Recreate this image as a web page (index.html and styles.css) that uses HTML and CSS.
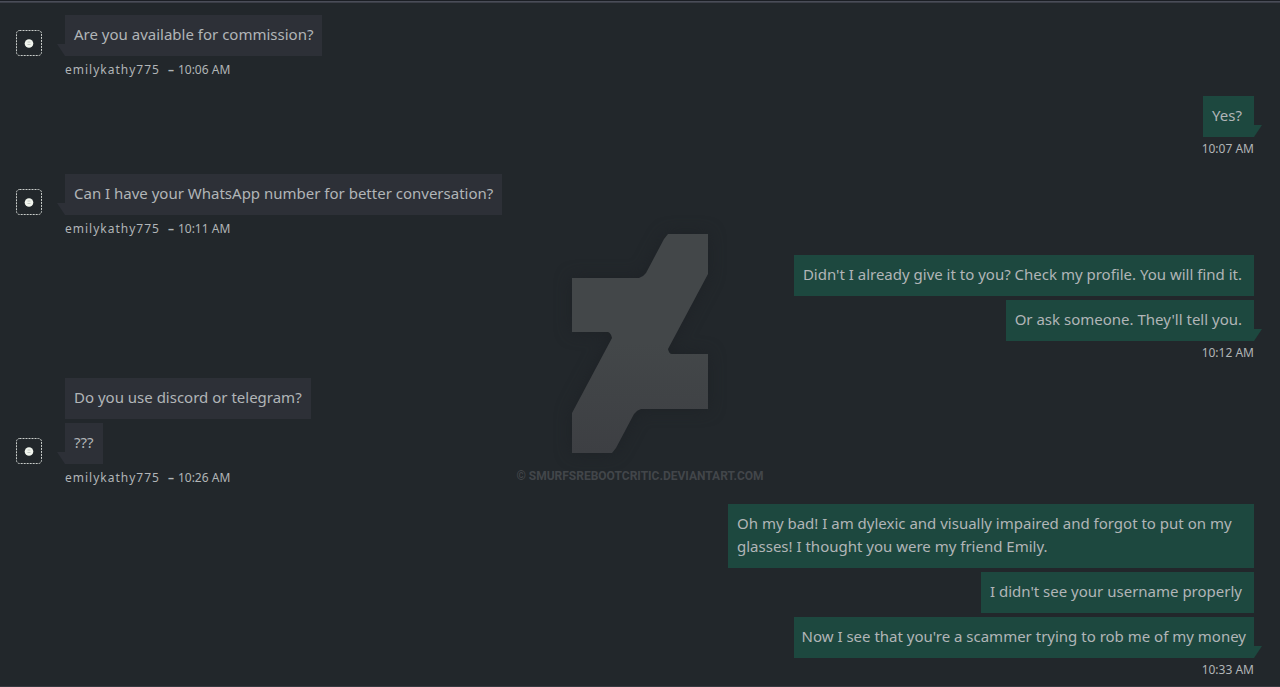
FILE: index.html
```html
<!DOCTYPE html>
<html lang="en">
<head>
<meta charset="utf-8">
<title>Chat with emilykathy775</title>
<link rel="stylesheet" href="styles.css">
</head>
<body>
<main class="chat">
  <section class="group incoming">
    <div class="row">
      <span class="avatar"><svg viewBox="0 0 26 26" aria-hidden="true"><rect class="frame" x=".5" y=".5" width="25" height="25" rx="3"/><circle class="dot" cx="13" cy="13.500" r="4.300"/><path class="face" d="M11.500 12h3M11.500 14.500h3"/></svg></span>
      <div class="bubbles"><p class="bubble tail">Are you available for commission?</p></div>
    </div>
    <p class="meta"><span class="user">emilykathy775</span><span class="dash">–</span><time>10:06 AM</time></p>
  </section>

  <section class="group outgoing">
    <div class="bubbles"><p class="bubble tail">Yes?</p></div>
    <p class="meta"><time>10:07 AM</time></p>
  </section>

  <section class="group incoming">
    <div class="row">
      <span class="avatar"><svg viewBox="0 0 26 26" aria-hidden="true"><rect class="frame" x=".5" y=".5" width="25" height="25" rx="3"/><circle class="dot" cx="13" cy="13.500" r="4.300"/><path class="face" d="M11.500 12h3M11.500 14.500h3"/></svg></span>
      <div class="bubbles"><p class="bubble tail">Can I have your WhatsApp number for better conversation?</p></div>
    </div>
    <p class="meta"><span class="user">emilykathy775</span><span class="dash">–</span><time>10:11 AM</time></p>
  </section>

  <section class="group outgoing">
    <div class="bubbles">
      <p class="bubble">Didn't I already give it to you? Check my profile. You will find it.</p>
      <p class="bubble tail">Or ask someone. They'll tell you.</p>
    </div>
    <p class="meta"><time>10:12 AM</time></p>
  </section>

  <section class="group incoming">
    <div class="row">
      <span class="avatar"><svg viewBox="0 0 26 26" aria-hidden="true"><rect class="frame" x=".5" y=".5" width="25" height="25" rx="3"/><circle class="dot" cx="13" cy="13.500" r="4.300"/><path class="face" d="M11.500 12h3M11.500 14.500h3"/></svg></span>
      <div class="bubbles">
        <p class="bubble">Do you use discord or telegram?</p>
        <p class="bubble tail">???</p>
      </div>
    </div>
    <p class="meta"><span class="user">emilykathy775</span><span class="dash">–</span><time>10:26 AM</time></p>
  </section>

  <section class="group outgoing">
    <div class="bubbles">
      <p class="bubble">Oh my bad! I am dylexic and visually impaired and forgot to put on my glasses! I thought you were my friend Emily.</p>
      <p class="bubble">I didn't see your username properly</p>
      <p class="bubble tail snug">Now I see that you're a scammer trying to rob me of my money</p>
    </div>
    <p class="meta"><time>10:33 AM</time></p>
  </section>

  <div class="watermark">
    <svg viewBox="0 0 136 219" aria-hidden="true">
      <defs><linearGradient id="mark" x1="0" y1="0" x2="0" y2="1"><stop offset="0.500" stop-color="#434749"/><stop offset="1" stop-color="#3d3f43"/></linearGradient></defs>
      <path fill="url(#mark)" d="M96 0H136V40L96 115Q97 120 100 120H136V175H69Q65 176 62 180L44 214L40 219H0V179L40 104Q39 99 36 98H0V44H67Q71 43 74 39L92 5Z"/>
    </svg>
    <p class="credit">© SMURFSREBOOTCRITIC.DEVIANTART.COM</p>
  </div>
</main>
</body>
</html>
```
FILE: styles.css
```css
* {
  box-sizing: border-box;
}

body {
  margin: 0;
  background: #22272b;
  color: #b1b5b7;
  font: 15px/23px "Noto Sans", sans-serif;
}

p {
  margin: 0;
}

.chat {
  position: relative;
  display: flex;
  flex-direction: column;
  gap: 13px;
  min-height: 100vh;
  padding: 14px 26px 0 16px;
  border-top: 1px solid #1b1e24;
  border-bottom: 1px solid #363940;
  box-shadow: inset 0 1px #4a4d58, inset 0 2px #3b3e47;
}

.row {
  display: flex;
  align-items: flex-end;
  gap: 23px;
}

.avatar {
  width: 26px;
  height: 26px;
}

.avatar svg {
  display: block;
}

.frame {
  fill: none;
  stroke: #c9cdca;
  stroke-dasharray: 2 1;
}

.dot {
  fill: #f1f5ee;
}

.face {
  fill: none;
  stroke: #c3c8c2;
}

.bubbles {
  display: flex;
  flex-direction: column;
  align-items: flex-start;
  gap: 4px;
}

.bubble {
  position: relative;
  max-width: 526px;
  padding: 8px 9px 10px;
  background: #2d3037;
}

.tail::after {
  content: "";
  position: absolute;
  bottom: 0;
  right: 100%;
  width: 8px;
  height: 12px;
  background: inherit;
  clip-path: polygon(0 0, 100% 0, 100% 100%);
}

.meta {
  display: flex;
  height: 27px;
  padding-left: 49px;
  font-size: 12px;
  line-height: 28px;
}

.user {
  letter-spacing: 1px;
}

.dash {
  margin: 0 4px 0 8px;
  font-weight: 700;
}

.outgoing .bubbles {
  align-items: flex-end;
}

.outgoing .bubble {
  padding-right: 12px;
  background: #1d483f;
}

.outgoing .snug {
  padding-right: 8px;
  padding-left: 8px;
}

.outgoing .tail::after {
  right: auto;
  left: 100%;
  clip-path: polygon(0 0, 100% 0, 0 100%);
}

.outgoing .meta {
  justify-content: flex-end;
  height: 24px;
  line-height: 24px;
}

.watermark {
  position: absolute;
  inset: 233px 0 auto;
  display: flex;
  flex-direction: column;
  align-items: center;
  gap: 11px;
  pointer-events: none;
}

.watermark svg {
  width: 136px;
  height: 219px;
  filter: drop-shadow(0 0 8px #1e2226);
}

.credit {
  color: #42464a;
  font: 700 12px/24px Roboto, sans-serif;
}
```
